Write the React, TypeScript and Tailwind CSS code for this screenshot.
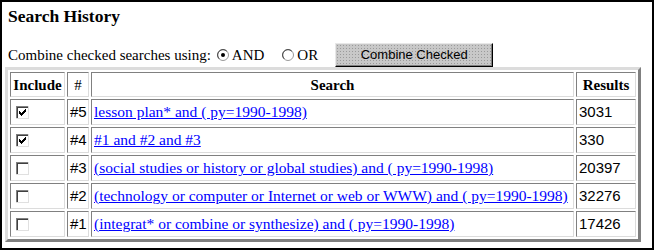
import React from "react";

const rows = [
  { n: 5, checked: true, query: "lesson plan* and ( py=1990-1998)", results: "3031" },
  { n: 4, checked: true, query: "#1 and #2 and #3", results: "330" },
  {
    n: 3,
    checked: false,
    query: "(social studies or history or global studies) and ( py=1990-1998)",
    results: "20397",
  },
  {
    n: 2,
    checked: false,
    query: "(technology or computer or Internet or web or WWW) and ( py=1990-1998)",
    results: "32276",
  },
  {
    n: 1,
    checked: false,
    query: "(integrat* or combine or synthesize) and ( py=1990-1998)",
    results: "17426",
  },
];

function Checkbox({ checked }: { checked: boolean }) {
  return (
    <svg width="13" height="13" viewBox="0 0 13 13" shapeRendering="crispEdges" className="block">
      <rect x="0" y="0" width="13" height="13" fill="#ffffff" />
      <path d="M0 0.5H12.5M0.5 0V12.5" stroke="#808080" />
      <path d="M1 1.5H11.5M1.5 1V11.5" stroke="#404040" />
      <path d="M0 12.5H13M12.5 0V13" stroke="#e0e0e0" />
      {checked && <polygon points="3,5 5,7 10,2 10,5 5,10 3,8" fill="#000000" />}
    </svg>
  );
}

function Radio({ checked }: { checked: boolean }) {
  return (
    <svg width="12" height="12" viewBox="0 0 12 12" className="block">
      <circle cx="6" cy="6" r="5.5" fill="#ffffff" stroke="#9a9a9a" />
      <path d="M2.2 9.8A5 5 0 0 1 9.8 2.2" fill="none" stroke="#404040" strokeWidth="1" />
      {checked && <circle cx="6" cy="6" r="2" fill="#000000" />}
    </svg>
  );
}

const cell =
  "border border-t-[#808080] border-l-[#808080] border-b-[#dcdcdc] border-r-[#dcdcdc] p-[1px] leading-[18px]";

export default function App() {
  return (
    <div className="h-[250px] w-[654px] border-2 border-black bg-white font-['Liberation_Serif',serif] text-black">
      <div className="h-[41px] pl-[6px] pt-[4px]">
        <h1 className="text-[17.5px] font-bold leading-[20px]">Search History</h1>
      </div>

      <div className="flex h-[24px] items-center pl-[6px] text-[15px]">
        <span>Combine checked searches using:</span>
        <span className="ml-[6px]">
          <Radio checked />
        </span>
        <span className="ml-[3px]">AND</span>
        <span className="ml-[18px]">
          <Radio checked={false} />
        </span>
        <span className="ml-[3px]">OR</span>
        <button className="ml-[17px] h-[24px] w-[158px] border border-t-[#e8e8e8] border-l-[#e8e8e8] border-b-black border-r-black bg-[#c8c8c8] bg-[radial-gradient(circle,#9a9a9a_0.7px,transparent_0.9px)] bg-[length:3px_3px] font-['Liberation_Sans',sans-serif] text-[13px] shadow-[inset_-1px_-1px_0_#808080]">
          Combine Checked
        </button>
      </div>

      <table className="ml-[3px] w-[636px] table-fixed border-separate border-spacing-[2px] border-[3px] border-t-[#dcdcdc] border-l-[#dcdcdc] border-b-[#808080] border-r-[#808080] text-[15px]">
        <thead>
          <tr className="font-['Liberation_Serif',serif]">
            <th className={`${cell} h-[25px] w-[55px] font-bold`}>Include</th>
            <th className={`${cell} w-[22px] font-normal`}>#</th>
            <th className={`${cell} w-[483px] font-bold`}>Search</th>
            <th className={`${cell} w-[60px] font-bold`}>Results</th>
          </tr>
        </thead>
        <tbody>
          {rows.map((r) => (
            <tr key={r.n}>
              <td className={`${cell} h-[26px] pl-[5px]`}>
                <Checkbox checked={r.checked} />
              </td>
              <td className={`${cell} pl-[2px] font-['Liberation_Sans',sans-serif]`}>#{r.n}</td>
              <td className={`${cell} pl-[2px] whitespace-nowrap text-[15.5px]`}>
                <a href="#" className="text-[#0000ff] underline">
                  {r.query}
                </a>
              </td>
              <td className={`${cell} pl-[2px] font-['Liberation_Sans',sans-serif]`}>{r.results}</td>
            </tr>
          ))}
        </tbody>
      </table>
    </div>
  );
}
